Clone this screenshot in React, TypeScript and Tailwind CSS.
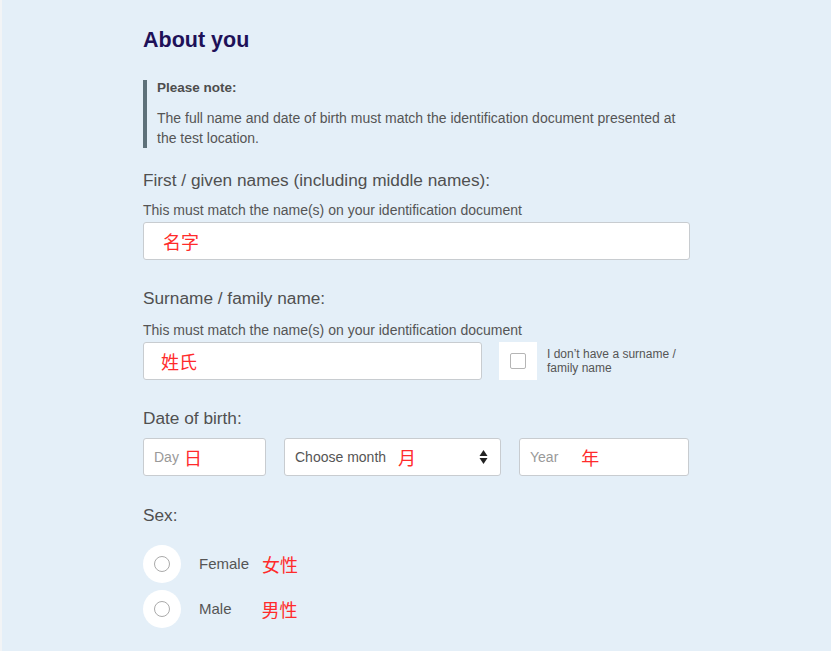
export default function App() {
  return (
    <main className="min-h-screen w-full bg-[#e4eff8] border-l-2 border-[#f2f4f6] font-['Liberation_Sans',Arial,sans-serif]">
      <div className="w-[547px] ml-[141px] pt-[27px] pb-4">
        {/* Heading */}
        <h1 className="text-[21.5px] leading-[26px] font-bold text-[#1e1158]">About you</h1>

        {/* Note */}
        <div className="mt-[27px] border-l-4 border-[#5e717a] pl-[10px]">
          <p className="text-[13.5px] leading-[16px] font-bold text-[#4d4d4d]">Please note:</p>
          <p className="mt-[12px] text-[14px] leading-[20px] text-[#555]">
            The full name and date of birth must match the identification document presented at the test location.
          </p>
        </div>

        {/* First names */}
        <div className="mt-[22px]">
          <p className="text-[17.25px] leading-[20px] text-[#505050]">First / given names (including middle names):</p>
          <p className="mt-[12px] text-[14px] leading-[16px] text-[#555]">This must match the name(s) on your identification document</p>
          <div className="mt-[4px] h-[38px] bg-white border border-[#c8ccd0] rounded-[3px] flex items-center pl-[19px]">
            <span className="text-[18px] text-[#ff2b2b] font-['Noto_Sans_CJK_SC',sans-serif]">名字</span>
          </div>
        </div>

        {/* Surname */}
        <div className="mt-[28px]">
          <p className="text-[17.25px] leading-[20px] text-[#505050]">Surname / family name:</p>
          <p className="mt-[14px] text-[14px] leading-[16px] text-[#555]">This must match the name(s) on your identification document</p>
          <div className="mt-[4px] flex items-center">
            <div className="w-[339px] h-[38px] bg-white border border-[#c8ccd0] rounded-[3px] flex items-center pl-[17px]">
              <span className="text-[18px] text-[#ff2b2b] font-['Noto_Sans_CJK_SC',sans-serif]">姓氏</span>
            </div>
            <div className="ml-[17px] w-[38px] h-[38px] bg-white flex items-center justify-center">
              <div className="w-[16px] h-[16px] border border-[#b5b5b5] rounded-[2px] bg-white" />
            </div>
            <p className="ml-[10px] text-[12px] leading-[14px] text-[#555]">
              I don’t have a surname /<br />family name
            </p>
          </div>
        </div>

        {/* Date of birth */}
        <div className="mt-[28px]">
          <p className="text-[17.25px] leading-[20px] text-[#505050]">Date of birth:</p>
          <div className="mt-[10px] flex items-center gap-[18px]">
            <div className="w-[123px] h-[38px] bg-white border border-[#c8ccd0] rounded-[3px] flex items-center pl-[10px]">
              <span className="text-[14px] text-[#999]">Day</span>
              <span className="ml-[5px] text-[18px] text-[#ff2b2b] font-['Noto_Sans_CJK_SC',sans-serif]">日</span>
            </div>
            <div className="w-[217px] h-[38px] bg-white border border-[#c8ccd0] rounded-[3px] flex items-center pl-[10px] pr-[12px]">
              <span className="text-[14px] text-[#555]">Choose month</span>
              <span className="ml-[12px] text-[18px] text-[#ff2b2b] font-['Noto_Sans_CJK_SC',sans-serif]">月</span>
              <svg className="ml-auto" width="9" height="16" viewBox="0 0 9 16">
                <path d="M4.5 1 L8.5 7 H0.5 Z" fill="#222" />
                <path d="M4.5 15 L8.5 9 H0.5 Z" fill="#222" />
              </svg>
            </div>
            <div className="w-[170px] h-[38px] bg-white border border-[#c8ccd0] rounded-[3px] flex items-center pl-[10px]">
              <span className="text-[14px] text-[#999]">Year</span>
              <span className="ml-[23px] text-[18px] text-[#ff2b2b] font-['Noto_Sans_CJK_SC',sans-serif]">年</span>
            </div>
          </div>
        </div>

        {/* Sex */}
        <div className="mt-[29px]">
          <p className="text-[17.25px] leading-[20px] text-[#505050]">Sex:</p>
          <div className="mt-[20px] flex flex-col gap-[7px]">
            {[
              { en: 'Female', zh: '女性', gap: 'ml-[13px]' },
              { en: 'Male', zh: '男性', gap: 'ml-[30px]' },
            ].map((o) => (
              <div key={o.en} className="flex items-center">
                <div className="w-[38px] h-[38px] rounded-full bg-white flex items-center justify-center">
                  <div className="w-[16px] h-[16px] rounded-full border border-[#aaa] bg-white" />
                </div>
                <span className="ml-[18px] text-[15px] text-[#555]">{o.en}</span>
                <span className={`${o.gap} text-[18px] text-[#ff2b2b] font-['Noto_Sans_CJK_SC',sans-serif]`}>{o.zh}</span>
              </div>
            ))}
          </div>
        </div>
      </div>
    </main>
  )
}
